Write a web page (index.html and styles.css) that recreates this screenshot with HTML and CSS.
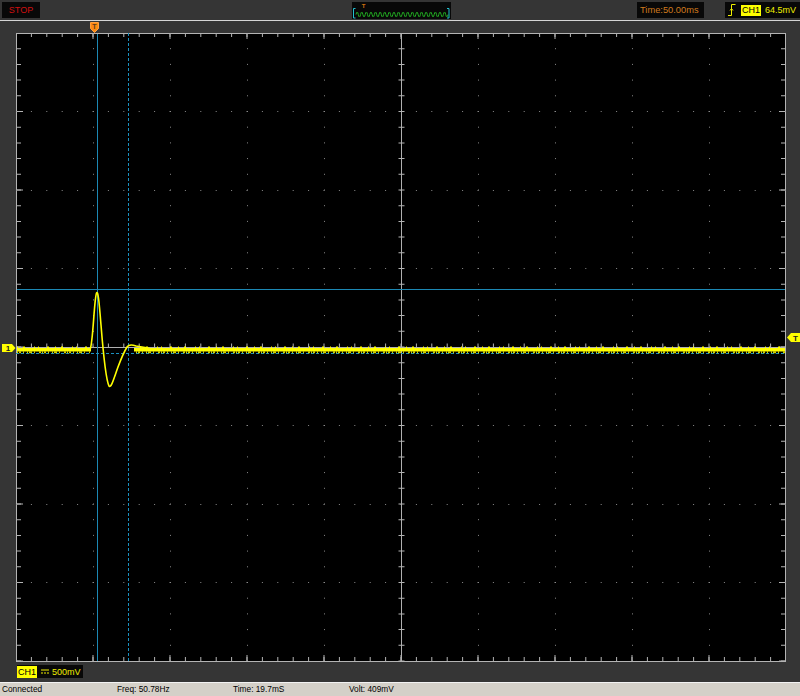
FILE: index.html
```html
<!DOCTYPE html>
<html lang="en">
<head>
    <meta charset="UTF-8">
    <meta name="viewport" content="width=device-width, initial-scale=1.0">
    <title>Scope</title>
    <link rel="stylesheet" href="styles.css">
</head>
<body>
    <header class="topbar">
        <div class="box stop">STOP</div>

        <div class="box overview">
            <svg width="99" height="17" viewBox="0 0 99 17">
                <text class="ov-trig" x="11.5" y="5.5">T</text>
                <path class="ov-wave" d="M4 12.5 q1.15 -5 2.3 0 t2.3 0 t2.3 0 t2.3 0 t2.3 0 t2.3 0 t2.3 0 t2.3 0 t2.3 0 t2.3 0 t2.3 0 t2.3 0 t2.3 0 t2.3 0 t2.3 0 t2.3 0 t2.3 0 t2.3 0 t2.3 0 t2.3 0 t2.3 0 t2.3 0 t2.3 0 t2.3 0 t2.3 0 t2.3 0 t2.3 0 t2.3 0 t2.3 0 t2.3 0 t2.3 0 t2.3 0 t2.3 0 t2.3 0 t2.3 0 t2.3 0 t2.3 0 t2.3 0 t2.3 0 t2.3 0"/>
                <path class="ov-bracket" d="M3.5 6.5 H1.5 V16 H3.5 M95 6.5 H97 V16 H95"/>
            </svg>
        </div>

        <div class="box timebase">Time:50.00ms</div>

        <div class="box trigger">
            <svg class="edge" width="9" height="12" viewBox="0 0 9 12">
                <path d="M1 11.5 H4.5 V0.5 H8.5 M3 6.5 L4.5 4.5 L6 6.5"/>
            </svg>
            <span class="ch-tag">CH1</span>
            <span class="level">64.5mV</span>
        </div>
    </header>

    <main class="screen">
        <!-- trigger position pin -->
        <svg class="marker trig-pos" width="9" height="11" viewBox="0 0 9 11">
            <polygon points="0.5,0.5 8.5,0.5 8.5,6.5 4.5,10.5 0.5,6.5"/>
            <text x="4.5" y="6.6">T</text>
        </svg>
        <!-- channel 1 ground pin -->
        <svg class="marker ch-pin" width="14" height="8" viewBox="0 0 14 8">
            <polygon points="0,0 10,0 13.5,4 10,8 0,8"/>
            <text x="6" y="7.2">1</text>
        </svg>
        <!-- trigger level pin -->
        <svg class="marker trig-level" width="13" height="9" viewBox="0 0 13 9">
            <polygon points="0,4.5 4,0 13,0 13,9 4,9"/>
            <text x="8.5" y="7.8">T</text>
        </svg>

        <div class="plot">
            <svg width="770" height="629" viewBox="16 33 770 629">
                <rect x="16.5" y="33.5" width="769" height="628" fill="#000" stroke="#b4b4b4"/>

                <g class="dots-v">
                    <line x1="93.5" y1="32.5" x2="93.5" y2="661"/>
                    <line x1="170.5" y1="32.5" x2="170.5" y2="661"/>
                    <line x1="247.5" y1="32.5" x2="247.5" y2="661"/>
                    <line x1="324.5" y1="32.5" x2="324.5" y2="661"/>
                    <line x1="478.5" y1="32.5" x2="478.5" y2="661"/>
                    <line x1="555.5" y1="32.5" x2="555.5" y2="661"/>
                    <line x1="632.5" y1="32.5" x2="632.5" y2="661"/>
                    <line x1="709.5" y1="32.5" x2="709.5" y2="661"/>
                </g>
                <g class="dots-h">
                    <line x1="15.5" y1="111.5" x2="786" y2="111.5"/>
                    <line x1="15.5" y1="190.5" x2="786" y2="190.5"/>
                    <line x1="15.5" y1="268.5" x2="786" y2="268.5"/>
                    <line x1="15.5" y1="425.5" x2="786" y2="425.5"/>
                    <line x1="15.5" y1="504.5" x2="786" y2="504.5"/>
                    <line x1="15.5" y1="582.5" x2="786" y2="582.5"/>
                </g>

                <g class="ticks">
                    <line class="minor-x" x1="15.5" y1="35" x2="786" y2="35"/>
                    <line class="major-x" x1="15.5" y1="36" x2="786" y2="36"/>
                    <line class="minor-x" x1="15.5" y1="659" x2="786" y2="659"/>
                    <line class="major-x" x1="15.5" y1="658" x2="786" y2="658"/>
                    <line class="minor-y" x1="19" y1="32.5" x2="19" y2="661"/>
                    <line class="major-y" x1="20" y1="32.5" x2="20" y2="661"/>
                    <line class="minor-y" x1="783" y1="32.5" x2="783" y2="661"/>
                    <line class="major-y" x1="782" y1="32.5" x2="782" y2="661"/>

                    <line class="axis" x1="401.5" y1="33" x2="401.5" y2="661"/>
                    <line class="axis" x1="16" y1="347.5" x2="786" y2="347.5"/>
                    <line class="axis-ticks-y" x1="401.5" y1="32.5" x2="401.5" y2="661"/>
                    <line class="axis-ticks-x" x1="15.5" y1="345.5" x2="786" y2="345.5"/>
                </g>

                <g class="cursors">
                    <rect class="solid" x="97" y="34" width="1" height="627"/>
                    <rect class="solid" x="17" y="289" width="768" height="1"/>
                    <line class="dashed" x1="128.5" y1="33" x2="128.5" y2="661"/>
                    <line class="dashed" x1="16" y1="353.5" x2="786" y2="353.5"/>
                </g>

                <g class="trace">
                    <line class="base" x1="17" y1="349.8" x2="91" y2="349.8"/>
                    <line class="base" x1="134" y1="349.8" x2="785" y2="349.8"/>
                    <line class="spikes-up" x1="17" y1="347.3" x2="90" y2="347.3"/>
                    <line class="spikes-up" x1="140" y1="347.3" x2="785" y2="347.3"/>
                    <line class="spikes-down" x1="17" y1="352.3" x2="90" y2="352.3"/>
                    <line class="spikes-down" x1="136" y1="352.3" x2="785" y2="352.3"/>
                    <path class="pulse" d="M90 349.5 C93 345 94 300 96.5 293 C98 290 99 300 101 325 C103 350 106 380 109 386 C111 389 114 378 118 367 C121 359 124 352 127 347 C129 344 132 344.5 136 346 L145 347.5 L152 349"/>
                </g>
            </svg>
        </div>
    </main>

    <div class="chbar">
        <div class="box chinfo">
            <span class="ch-tag">CH1</span>
            <svg class="coupling" width="8" height="5" viewBox="0 0 8 5">
                <path d="M0 1 H8"/>
                <path class="dc-dash" d="M0 4 H8"/>
            </svg>
            <span class="level">500mV</span>
        </div>
    </div>

    <footer class="status">
        <span class="cell first">Connected</span>
        <span class="cell">Freq: 50.78Hz</span>
        <span class="cell">Time: 19.7mS</span>
        <span class="cell">Volt: 409mV</span>
    </footer>
</body>
</html>
```

FILE: styles.css
```css
* {
    box-sizing: border-box;
    margin: 0;
    padding: 0;
}

body {
    width: 800px;
    height: 696px;
    overflow: hidden;
    background: #353535;
    font-family: "Liberation Sans", Arial, sans-serif;
}

/* top bar */
.topbar {
    display: flex;
    height: 21px;
    padding: 2px 0 0 2px;
    border-bottom: 1px solid #d6d6d6;
}

.box {
    height: 16px;
    background: #080808;
    display: flex;
    align-items: center;
}

.stop {
    width: 38px;
    justify-content: center;
    color: #d01010;
    font-size: 9px;
}

.overview {
    width: 99px;
    margin-left: 312px;
    height: 17px;
}

.overview svg {
    display: block;
}

.ov-wave {
    fill: none;
    stroke: #22b022;
    stroke-width: 1;
}

.ov-bracket {
    fill: none;
    stroke: #22c0d0;
    stroke-width: 1;
}

.ov-trig {
    fill: #d07010;
    font-size: 6px;
    font-weight: bold;
    text-anchor: middle;
}

.timebase {
    width: 67px;
    margin-left: 186px;
    padding-left: 3px;
    color: #d07a1e;
    font-size: 9.3px;
}

.trigger {
    width: 75px;
    margin-left: 21px;
    padding-left: 2px;
    font-size: 9px;
}

.edge {
    display: block;
    margin-right: 5px;
}

.edge path {
    fill: none;
    stroke: #f0f000;
    stroke-width: 1;
}

.ch-tag {
    background: #ffff00;
    color: #000;
    height: 11px;
    line-height: 11px;
    padding: 0 1px;
}

.level {
    color: #f0f000;
    margin-left: 4px;
}

/* scope screen */
.screen {
    position: relative;
    height: 641px;
    padding: 12px 0 0 16px;
}

.plot svg {
    display: block;
}

.marker {
    position: absolute;
    display: block;
}

.marker text {
    font-family: "Liberation Sans", Arial, sans-serif;
    font-weight: bold;
    text-anchor: middle;
}

.trig-pos {
    left: 90px;
    top: 1px;
}

.trig-pos polygon {
    fill: #ff8a10;
    stroke: #ffa040;
}

.trig-pos text {
    font-size: 7px;
    fill: #5a3a20;
}

.ch-pin {
    left: 2px;
    top: 323px;
}

.ch-pin polygon,
.trig-level polygon {
    fill: #ffff00;
}

.ch-pin text,
.trig-level text {
    font-size: 8px;
    fill: #222;
}

.trig-level {
    left: 787px;
    top: 312px;
}

.dots-v line,
.dots-h line {
    stroke: #8a8a8a;
    stroke-width: 1;
}

.dots-v line {
    stroke-dasharray: 1 14.7;
}

.dots-h line {
    stroke-dasharray: 1 14.4;
}

.ticks line {
    stroke: #b4b4b4;
}

.minor-x {
    stroke-width: 4;
    stroke-dasharray: 1 14.4;
}

.major-x {
    stroke-width: 6;
    stroke-dasharray: 1 76;
}

.minor-y {
    stroke-width: 4;
    stroke-dasharray: 1 14.7;
}

.major-y {
    stroke-width: 6;
    stroke-dasharray: 1 77.5;
}

.ticks .axis {
    stroke: #b0b0b0;
    stroke-width: 1;
}

.axis-ticks-y {
    stroke-width: 6;
    stroke-dasharray: 1 14.7;
}

.axis-ticks-x {
    stroke-width: 4;
    stroke-dasharray: 1 14.4;
}

.cursors .solid {
    fill: #1c88b4;
}

.cursors .dashed {
    stroke: #1a90c0;
    stroke-width: 1;
    stroke-dasharray: 3 2;
}

.trace line {
    stroke: #ffff00;
}

.trace .base {
    stroke-width: 3.4;
}

.trace .spikes-up {
    stroke-width: 1.6;
    stroke-dasharray: 1 5 2 9 1 3 1 8 2 6;
}

.trace .spikes-down {
    stroke: #d4d400;
    stroke-width: 2;
    stroke-dasharray: 1 1 2 2 1 3 1 1 3 2 1 4 2 1;
}

.pulse {
    fill: none;
    stroke: #ffff00;
    stroke-width: 1.6;
}

/* channel info */
.chbar {
    height: 20px;
    padding: 3px 0 0 17px;
}

.chinfo {
    width: 66px;
    height: 13px;
    font-size: 9px;
}

.chinfo .ch-tag {
    height: 12px;
    line-height: 12px;
}

.coupling {
    display: block;
    margin-left: 4px;
}

.coupling path {
    stroke: #f0f000;
    stroke-width: 1;
}

.coupling .dc-dash {
    stroke-dasharray: 2 1;
}

.chinfo .level {
    margin-left: 3px;
}

/* status bar */
.status {
    display: flex;
    height: 14px;
    border-top: 1px solid #f2f2f2;
    background: #d4d0c8;
    color: #000;
    font-size: 8.3px;
    line-height: 13px;
}

.cell {
    width: 116px;
}

.cell.first {
    width: 117px;
    padding-left: 2px;
}
```
